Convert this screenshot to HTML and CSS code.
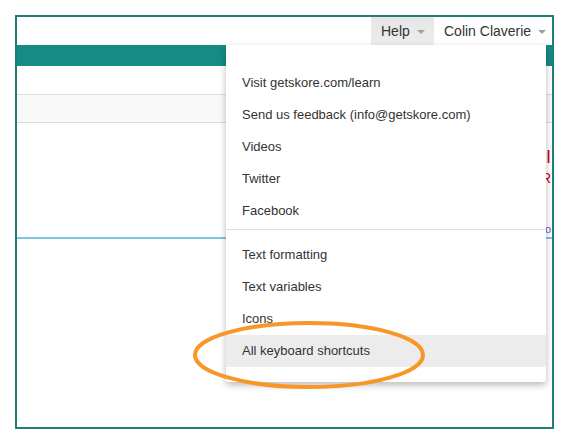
FILE: index.html
```html
<!DOCTYPE html>
<html>
<head>
<meta charset="utf-8">
<link rel="stylesheet" href="styles.css">
</head>
<body>
<div class="frame">
  <div class="header">
    <div class="nav-item help">Help <span class="caret"></span></div>
    <div class="nav-item user">Colin Claverie <span class="caret"></span></div>
  </div>
  <div class="teal-bar"></div>
  <div class="row-white"></div>
  <div class="row-gray"></div>
  <div class="content">
    <div class="red-big">I</div>
    <div class="red-small">R</div>
    <div class="link-text">o</div>
  </div>
  <div class="blue-line"></div>

  <div class="menu">
    <div class="item">Visit getskore.com/learn</div>
    <div class="item">Send us feedback (info@getskore.com)</div>
    <div class="item">Videos</div>
    <div class="item">Twitter</div>
    <div class="item">Facebook</div>
    <div class="divider"></div>
    <div class="item">Text formatting</div>
    <div class="item">Text variables</div>
    <div class="item">Icons</div>
    <div class="item hover">All keyboard shortcuts</div>
  </div>

  <svg class="circle" width="236" height="72" viewBox="0 0 236 72">
    <ellipse cx="118" cy="35" rx="114" ry="32" fill="none" stroke="#f7972a" stroke-width="4"/>
  </svg>
</div>
</body>
</html>
```
FILE: styles.css
```css
html, body {
  margin: 0;
  padding: 0;
  background: #fff;
}
body {
  font-family: "Liberation Sans", Arial, sans-serif;
  color: #333;
}
.frame {
  position: relative;
  margin: 15px 0 0 15px;
  width: 535px;
  height: 410px;
  border: 2px solid #1f7f77;
  overflow: hidden;
  display: flex;
  flex-direction: column;
}
.header {
  height: 28px;
  display: flex;
  justify-content: flex-end;
  background: #fff;
}
.nav-item {
  display: flex;
  align-items: center;
  font-size: 14px;
  color: #333;
  padding-left: 10px;
  box-sizing: border-box;
  white-space: nowrap;
}
.nav-item.help {
  width: 63px;
  background: linear-gradient(#e6e6e6, #ededed);
}
.nav-item.user {
  width: 118px;
}
.caret {
  display: inline-block;
  width: 0;
  height: 0;
  margin-left: 7px;
  margin-top: 2px;
  border-top: 4px solid #a0a0a0;
  border-left: 4px solid transparent;
  border-right: 4px solid transparent;
}
.teal-bar {
  height: 21px;
  background: #168a85;
}
.row-white {
  height: 28px;
  border-bottom: 1px solid #dcdcdc;
}
.row-gray {
  height: 27px;
  background: #f9f9f9;
  border-bottom: 1px solid #dcdcdc;
}
.content {
  height: 114px;
  display: flex;
  flex-direction: column;
  align-items: flex-end;
  padding-right: 1px;
}
.red-big {
  margin-top: 24px;
  color: #d0021b;
  font-size: 18px;
  line-height: 20px;
}
.red-small {
  margin-top: 3px;
  color: #d0021b;
  font-size: 14px;
  line-height: 16px;
}
.link-text {
  margin-top: 36px;
  color: #5b4fd6;
  font-size: 11px;
  line-height: 14px;
}
.blue-line {
  height: 2px;
  background: #7ec6df;
}
.menu {
  position: absolute;
  left: 209px;
  top: 28px;
  width: 320px;
  padding: 22px 0 15px 0;
  background: #fff;
  box-shadow: 0 3px 7px rgba(0, 0, 0, 0.28);
  border-radius: 0 0 3px 3px;
}
.item {
  height: 32px;
  line-height: 32px;
  padding-left: 16px;
  font-size: 13px;
  color: #333;
  white-space: nowrap;
}
.item.hover {
  background: #ececec;
}
.divider {
  height: 1px;
  background: #dedede;
  margin: 2px 0 9px 0;
}
.circle {
  position: absolute;
  left: 174px;
  top: 303px;
}
```
